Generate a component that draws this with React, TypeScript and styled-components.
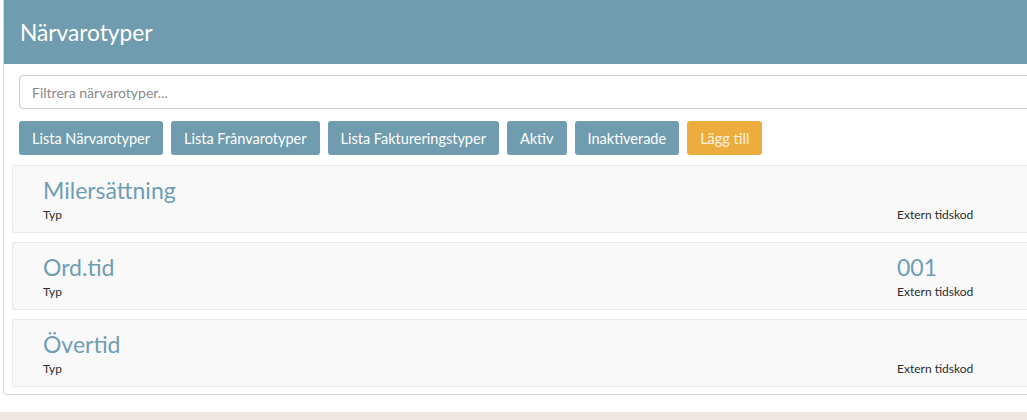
import styled, { createGlobalStyle } from 'styled-components';

const GlobalStyle = createGlobalStyle`
  html, body {
    margin: 0;
    padding: 0;
    background: #ede8e4;
    font-family: Lato, "Open Sans", sans-serif;
  }
`;

const Viewport = styled.div`
  width: 100%;
  overflow: hidden;
  background: #ffffff;
`;

const Page = styled.div`
  padding: 0 0 17px 3px;
  width: 1080px;
`;

const Panel = styled.div`
  border: 1px solid #d6d6d6;
  border-top: none;
  border-radius: 0 0 4px 4px;
`;

const Header = styled.div`
  background: #709cb0;
  height: 64px;
  display: flex;
  align-items: center;
  padding-left: 16px;
`;

const Title = styled.h1`
  margin: 0;
  color: #ffffff;
  font-size: 22.7px;
  font-weight: 400;
`;

const Body = styled.div`
  padding: 11px 0 7px 8px;
  display: flex;
  flex-direction: column;
`;

const Filter = styled.input`
  margin-left: 7px;
  height: 34px;
  box-sizing: border-box;
  border: 1px solid #cccccc;
  border-radius: 4px;
  padding: 0 12px;
  font-family: inherit;
  font-size: 14px;
  color: #555;
  &::placeholder {
    color: #8a8a8a;
  }
`;

const Toolbar = styled.div`
  display: flex;
  gap: 8px;
  margin: 12px 0 10px 7px;
`;

const Button = styled.button<{ $accent?: boolean }>`
  height: 34px;
  padding: 0 13px;
  border: none;
  border-radius: 3px;
  background: ${p => (p.$accent ? '#ecac3e' : '#709cb0')};
  color: ${p => (p.$accent ? '#fdf3e2' : '#ffffff')};
  font-family: inherit;
  font-size: 14.5px;
`;

const List = styled.div`
  display: flex;
  flex-direction: column;
  gap: 9px;
`;

const Card = styled.div`
  background: #f9f9f9;
  border: 1px solid #e9e9e9;
  border-radius: 3px;
  height: 68px;
  box-sizing: border-box;
  padding: 8px 0 0 30px;
  display: grid;
  grid-template-columns: 854px 1fr;
`;

const Cell = styled.div`
  display: flex;
  flex-direction: column;
`;

const Value = styled.div`
  color: #6f9db5;
  font-size: 23px;
  line-height: 33px;
  height: 33px;
`;

const Label = styled.div`
  color: #2b2b2b;
  font-size: 12px;
  line-height: 15px;
`;

const items = [
  { name: 'Milersättning', code: '' },
  { name: 'Ord.tid', code: '001' },
  { name: 'Övertid', code: '' },
];

export default function App() {
  return (
    <>
      <GlobalStyle />
      <Viewport>
        <Page>
          <Panel>
            <Header>
              <Title>Närvarotyper</Title>
            </Header>
            <Body>
              <Filter placeholder="Filtrera närvarotyper..." />
              <Toolbar>
                <Button>Lista Närvarotyper</Button>
                <Button>Lista Frånvarotyper</Button>
                <Button>Lista Faktureringstyper</Button>
                <Button>Aktiv</Button>
                <Button>Inaktiverade</Button>
                <Button $accent>Lägg till</Button>
              </Toolbar>
              <List>
                {items.map(it => (
                  <Card key={it.name}>
                    <Cell>
                      <Value>{it.name}</Value>
                      <Label>Typ</Label>
                    </Cell>
                    <Cell>
                      <Value>{it.code}</Value>
                      <Label>Extern tidskod</Label>
                    </Cell>
                  </Card>
                ))}
              </List>
            </Body>
          </Panel>
        </Page>
      </Viewport>
    </>
  );
}
